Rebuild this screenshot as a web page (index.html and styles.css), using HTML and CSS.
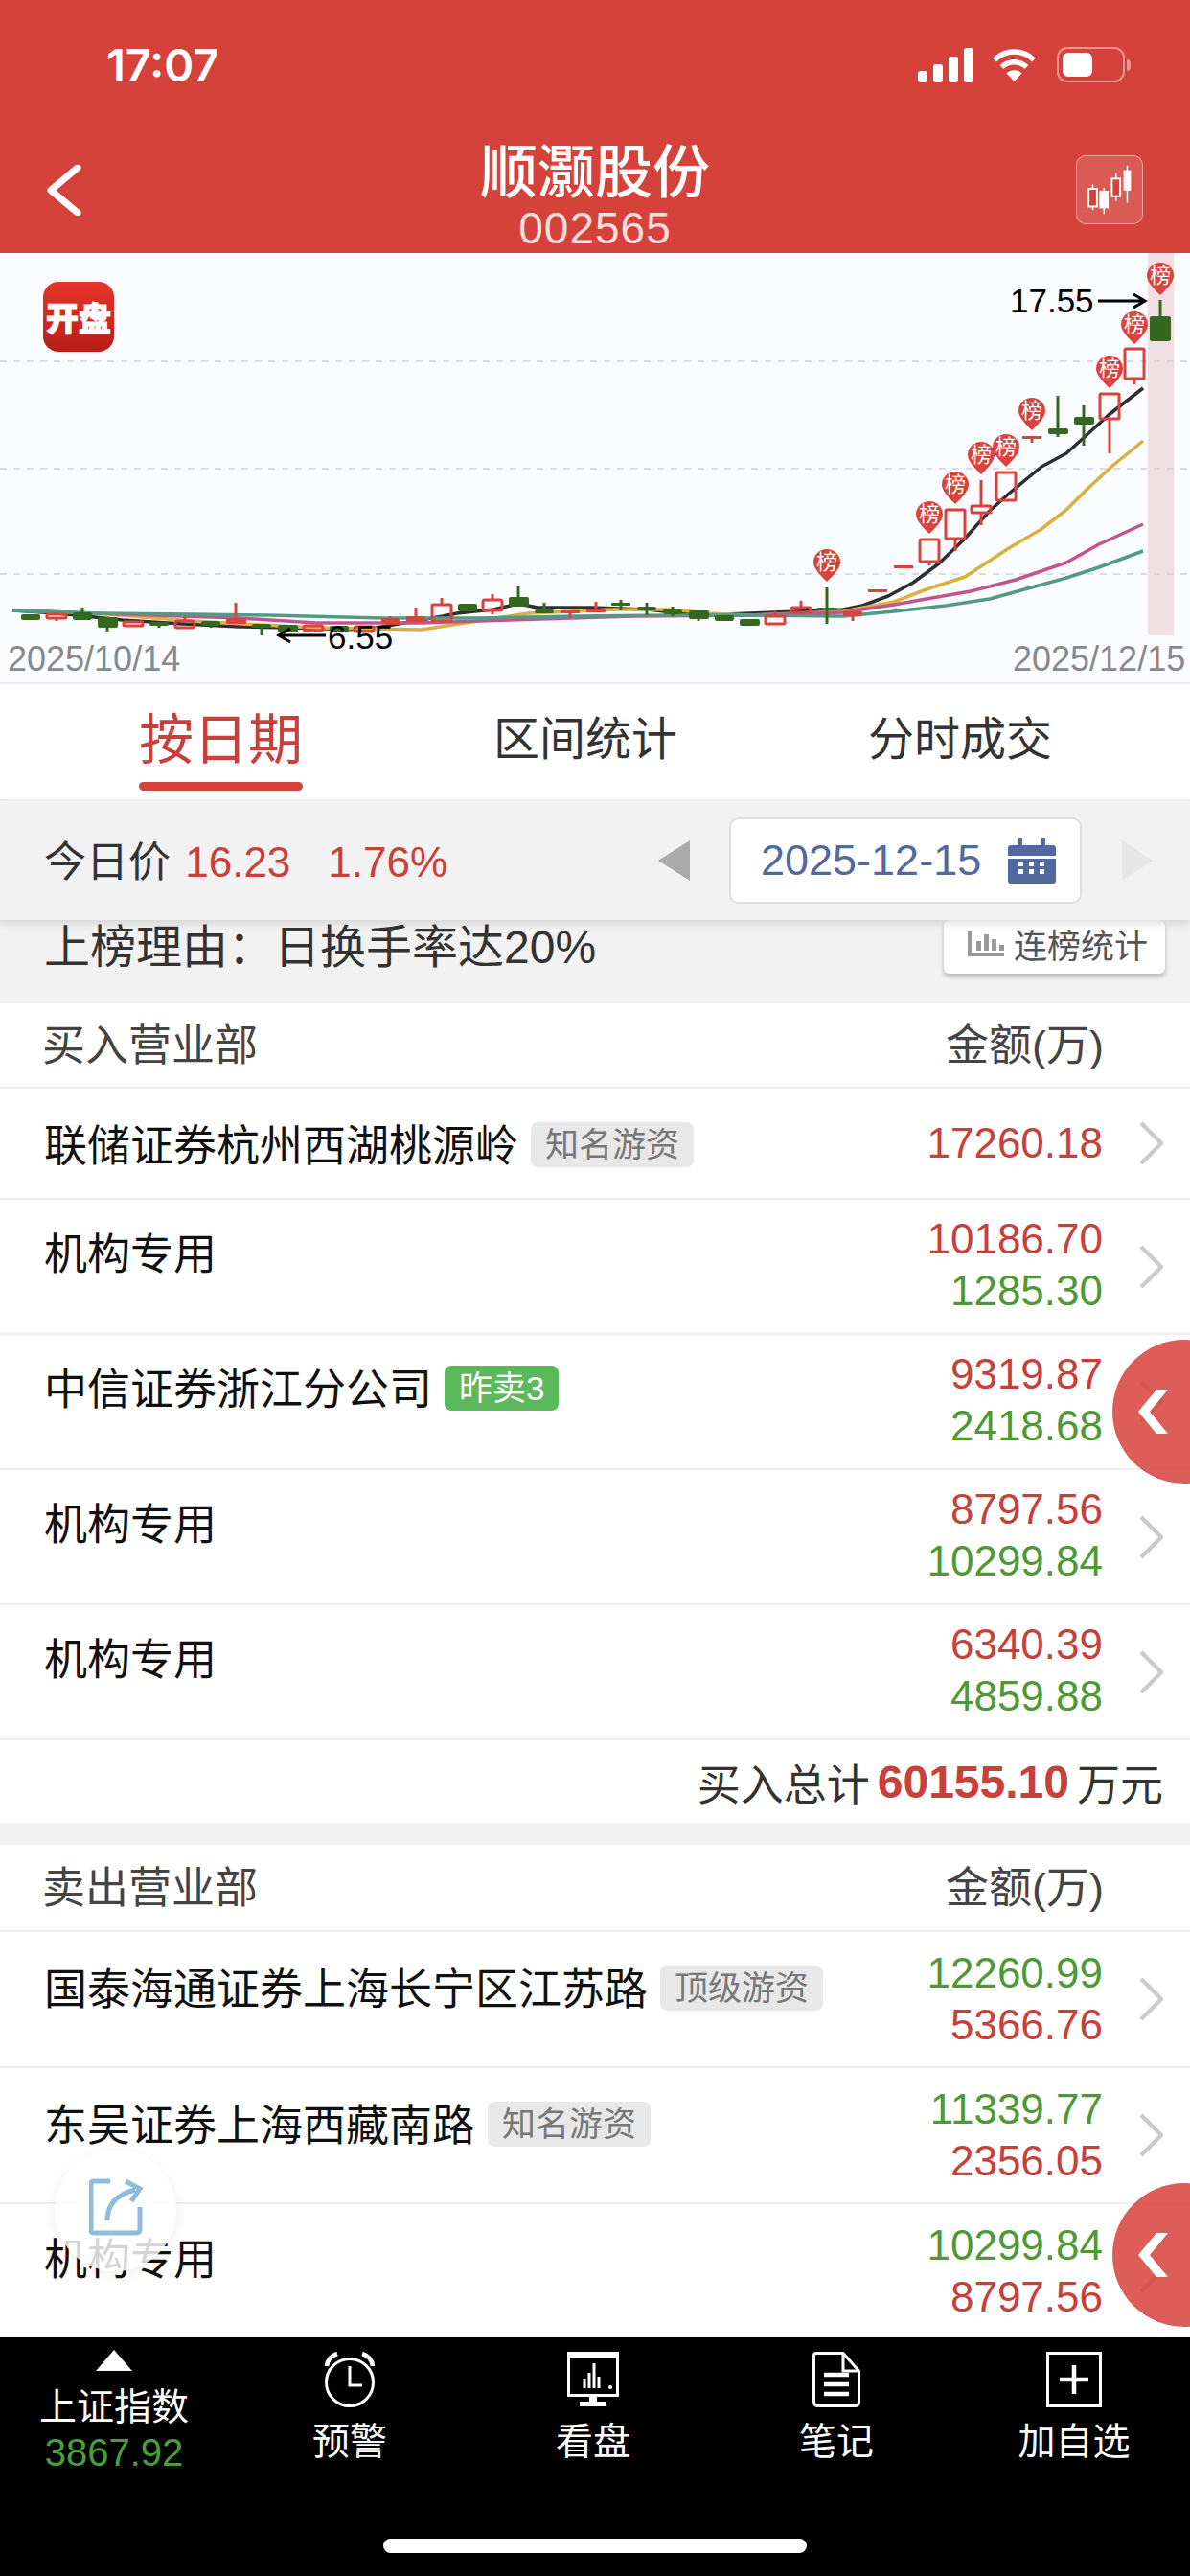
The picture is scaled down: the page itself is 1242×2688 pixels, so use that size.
FILE: index.html
```html
<!DOCTYPE html>
<html lang="zh-CN">
<head>
  <meta charset="UTF-8">
  <meta name="viewport" content="width=device-width, initial-scale=1.0">
  <title>顺灏股份</title>
  <link rel="stylesheet" href="styles.css">
</head>
<body>
  <div class="page">
    <header class="header">
      <div class="status">
        <span class="clock">17:07</span>
        <div class="status-icons">
          <div class="signal"><i></i><i></i><i></i><i></i></div>
          <svg class="wifi" viewBox="0 0 47 35">
            <path class="arc" d="M3 12.5A29 29 0 0 1 44 12.5"/>
            <path class="arc" d="M10.5 20A18.500 18.500 0 0 1 36.500 20"/>
            <path d="M23.500 35L15.500 26.500A11.500 11.500 0 0 1 31.500 26.500Z"/>
          </svg>
          <div class="battery"><b></b></div>
          <span class="battery-tip"></span>
        </div>
      </div>
      <div class="nav">
        <svg class="back" viewBox="0 0 37 53"><path d="M33 3L5 26.500L33 50"/></svg>
        <div class="nav-title">
          <h1>顺灏股份</h1>
          <p>002565</p>
        </div>
        <div class="kline-btn">
          <svg viewBox="0 0 70 72">
            <path class="w" d="M17 30V58M29 34V62M42 18V48M54 10V50"/>
            <rect class="o" x="12.500" y="35" width="9" height="19"/>
            <rect class="f" x="24" y="37" width="10" height="19"/>
            <rect class="o" x="37.500" y="24" width="9" height="19"/>
            <rect class="f" x="50" y="15" width="8" height="22"/>
          </svg>
        </div>
      </div>
    </header>

    <section class="chart">
      <svg class="kline" viewBox="0 264 1242 448">
        <rect class="today" x="1198" y="264" width="27" height="399"/>
        <path class="grid" d="M0 377H1242M0 489H1242M0 599H1242"/>

        <!-- moving averages, under the candles -->
        <polyline class="ma ma5" points="13,637 60,640 128,647 190,651 250,654 300,655 381,657 462,643 477,640 515,636 541,630 561,634 617,634 676,636 729,642 783,640 880,636 900,632 927,622 953,608 980,588 1007,562 1033,533 1053,515 1087,487 1113,473 1133,455 1157,433 1193,405"/>
        <polyline class="ma ma10" points="13,637 100,640 200,648 330,655 440,657 551,640 638,636 700,636 740,640 783,642 880,638 933,628 967,615 1007,602 1053,572 1087,552 1113,532 1133,512 1160,487 1193,460"/>
        <polyline class="ma ma20" points="13,637 100,640 250,645 330,650 440,650 500,648 660,643 783,642 880,639 933,631 967,625 1013,617 1060,605 1113,587 1147,568 1193,547"/>
        <polyline class="ma ma30" points="13,637 100,640 200,641 280,642 400,645 500,645 600,643 700,642 783,642 880,643 933,638 987,632 1033,625 1113,603 1147,592 1193,575"/>

        <!-- falling days -->
        <path class="wick down" d="M86 634V647M112 655V659M166 653V655M220 653V655M273 651V663M541 612V623M568 629V636M648 626V637M675 629V642M702 633V643M729 646V648M863 613V651M1104 413V456M1131 423V465M1211 313V330"/>
        <g class="down">
          <rect x="22" y="641" width="20" height="6" rx="2"/>
          <rect x="76" y="639" width="20" height="8" rx="2"/>
          <rect x="102" y="644" width="21" height="11" rx="2"/>
          <rect x="156" y="649" width="20" height="4" rx="2"/>
          <rect x="210" y="648" width="20" height="5" rx="2"/>
          <rect x="263" y="651" width="20" height="4" rx="2"/>
          <rect x="290" y="652" width="21" height="8" rx="2"/>
          <rect x="344" y="653" width="20" height="6" rx="2"/>
          <rect x="478" y="630" width="20" height="8" rx="2"/>
          <rect x="531" y="623" width="21" height="10" rx="2"/>
          <rect x="558" y="636" width="20" height="4" rx="2"/>
          <rect x="638" y="629" width="20" height="3" rx="1"/>
          <rect x="665" y="633" width="20" height="4" rx="2"/>
          <rect x="692" y="636" width="20" height="5" rx="2"/>
          <rect x="719" y="637" width="21" height="9" rx="2"/>
          <rect x="746" y="642" width="20" height="6" rx="2"/>
          <rect x="772" y="646" width="21" height="7" rx="2"/>
          <rect x="853" y="634" width="20" height="3" rx="1"/>
          <rect x="1094" y="447" width="21" height="6" rx="2"/>
          <rect x="1121" y="435" width="21" height="8" rx="2"/>
          <rect x="1200" y="330" width="22" height="26" rx="2"/>
        </g>

        <!-- rising days -->
        <path class="wick up" d="M59 645V648M193 643V648M246 629V645M434 634V643M407 643V648M461 624V631M514 620V626M514 637V641M595 640V645M622 628V635M809 638V643M836 627V634M890 643V648M970 586V590M997 562V575M1024 501V528M1024 535V548M1077 456V462M1158 437V473M1184 395V401M327 658V660"/>
        <g class="up">
          <rect x="49" y="641" width="20" height="4" rx="1"/>
          <rect x="129" y="649" width="20" height="4" rx="1"/>
          <rect x="183" y="648" width="20" height="7" rx="2"/>
          <rect x="317" y="653" width="20" height="5" rx="2"/>
          <rect x="370" y="654" width="20" height="5" rx="2"/>
          <rect x="451" y="631" width="20" height="17" rx="1"/>
          <rect x="504" y="626" width="20" height="11" rx="2"/>
          <rect x="799" y="643" width="20" height="8" rx="1"/>
          <rect x="826" y="634" width="20" height="5" rx="1"/>
          <rect x="960" y="563" width="20" height="23" rx="1"/>
          <rect x="987" y="532" width="20" height="30" rx="1"/>
          <rect x="1014" y="528" width="20" height="7" rx="1"/>
          <rect x="1040" y="493" width="20" height="29" rx="1"/>
          <rect x="1148" y="411" width="20" height="26" rx="1"/>
          <rect x="1174" y="364" width="20" height="31" rx="1"/>
        </g>
        <g class="up-solid">
          <rect x="398" y="645" width="20" height="6" rx="1"/>
          <rect x="236" y="645" width="21" height="6" rx="1"/>
          <rect x="424" y="643" width="20" height="6" rx="1"/>
          <rect x="585" y="637" width="20" height="3" rx="1"/>
          <rect x="612" y="635" width="20" height="4" rx="1"/>
          <rect x="880" y="638" width="20" height="5" rx="1"/>
          <rect x="906" y="615" width="20" height="3"/>
          <rect x="933" y="590" width="20" height="3"/>
          <rect x="1067" y="455" width="20" height="3"/>
        </g>

        <!-- dragon list markers -->
        <g class="pin" transform="translate(863 587)"><path d="M-14 0A14 14 0 1 1 14 0Q14 7 0 20Q-14 7-14 0Z"/><text y="7">榜</text></g>
        <g class="pin" transform="translate(970 537)"><path d="M-14 0A14 14 0 1 1 14 0Q14 7 0 20Q-14 7-14 0Z"/><text y="7">榜</text></g>
        <g class="pin" transform="translate(997 506)"><path d="M-14 0A14 14 0 1 1 14 0Q14 7 0 20Q-14 7-14 0Z"/><text y="7">榜</text></g>
        <g class="pin" transform="translate(1024 475)"><path d="M-14 0A14 14 0 1 1 14 0Q14 7 0 20Q-14 7-14 0Z"/><text y="7">榜</text></g>
        <g class="pin" transform="translate(1050 467)"><path d="M-14 0A14 14 0 1 1 14 0Q14 7 0 20Q-14 7-14 0Z"/><text y="7">榜</text></g>
        <g class="pin" transform="translate(1077 429)"><path d="M-14 0A14 14 0 1 1 14 0Q14 7 0 20Q-14 7-14 0Z"/><text y="7">榜</text></g>
        <g class="pin" transform="translate(1158 385)"><path d="M-14 0A14 14 0 1 1 14 0Q14 7 0 20Q-14 7-14 0Z"/><text y="7">榜</text></g>
        <g class="pin" transform="translate(1184 339)"><path d="M-14 0A14 14 0 1 1 14 0Q14 7 0 20Q-14 7-14 0Z"/><text y="7">榜</text></g>
        <g class="pin" transform="translate(1211 288)"><path d="M-14 0A14 14 0 1 1 14 0Q14 7 0 20Q-14 7-14 0Z"/><text y="7">榜</text></g>

        <!-- high and low labels -->
        <text class="extreme" x="1054" y="326">17.55</text>
        <path class="arrow" d="M1146 314H1194M1183 307L1195 314L1183 321"/>
        <text class="extreme" x="342" y="677">6.55</text>
        <path class="arrow" d="M340 663H292M303 656L291 663L303 670"/>

        <text class="date" x="8" y="700">2025/10/14</text>
        <text class="date" x="1057" y="700">2025/12/15</text>
      </svg>
      <div class="open-logo">开盘</div>
    </section>

    <nav class="tabs">
      <div class="tab active">按日期</div>
      <div class="tab">区间统计</div>
      <div class="tab">分时成交</div>
    </nav>

    <div class="toolbar">
      <div class="today-price">今日价 <span class="num">16.23</span><span class="num pct">1.76%</span></div>
      <div class="date-picker">
        <span class="tri tri-prev"></span>
        <div class="date-box">
          <span>2025-12-15</span>
          <svg class="calendar" viewBox="0 0 50 48">
            <path d="M3 8H47Q50 8 50 11V45Q50 48 47 48H3Q0 48 0 45V11Q0 8 3 8Z"/>
            <rect x="0" y="19" width="50" height="3" fill="#fff"/>
            <path class="ring" d="M13 0V12M37 0V12"/>
            <g fill="#fff">
              <rect x="11" y="25" width="5" height="5"/><rect x="22" y="25" width="5" height="5"/><rect x="33" y="25" width="5" height="5"/>
              <rect x="11" y="33" width="5" height="5"/><rect x="22" y="33" width="5" height="5"/><rect x="33" y="33" width="5" height="5"/>
            </g>
          </svg>
        </div>
        <span class="tri tri-next"></span>
      </div>
    </div>

    <main class="list">
      <div class="reason">
        <span>上榜理由：日换手率达20%</span>
        <button class="streak-btn">
          <svg viewBox="0 0 38 26"><path d="M0 0H4V22H38V26H0ZM9 10H14V20H9ZM17 3H22V20H17ZM25 8H30V20H25ZM33 14H38V20H33Z"/></svg>
          连榜统计
        </button>
      </div>

      <div class="list-head"><span>买入营业部</span><span class="amount-title">金额(万)</span></div>
      <div class="row row-single">
        <div class="name">联储证券杭州西湖桃源岭<span class="tag">知名游资</span></div>
        <div class="values"><div class="red">17260.18</div></div>
        <svg class="chev" viewBox="0 0 25 46"><path d="M2 2L23 23L2 44"/></svg>
      </div>
      <div class="row">
        <div class="name">机构专用</div>
        <div class="values"><div class="red">10186.70</div><div class="green">1285.30</div></div>
        <svg class="chev" viewBox="0 0 25 46"><path d="M2 2L23 23L2 44"/></svg>
      </div>
      <div class="row">
        <div class="name">中信证券浙江分公司<span class="tag tag-green">昨卖3</span></div>
        <div class="values"><div class="red">9319.87</div><div class="green">2418.68</div></div>
        <svg class="chev" viewBox="0 0 25 46"><path d="M2 2L23 23L2 44"/></svg>
      </div>
      <div class="row">
        <div class="name">机构专用</div>
        <div class="values"><div class="red">8797.56</div><div class="green">10299.84</div></div>
        <svg class="chev" viewBox="0 0 25 46"><path d="M2 2L23 23L2 44"/></svg>
      </div>
      <div class="row">
        <div class="name">机构专用</div>
        <div class="values"><div class="red">6340.39</div><div class="green">4859.88</div></div>
        <svg class="chev" viewBox="0 0 25 46"><path d="M2 2L23 23L2 44"/></svg>
      </div>
      <div class="total">买入总计<b>60155.10</b>万元</div>

      <div class="list-head list-head-sell"><span>卖出营业部</span><span class="amount-title">金额(万)</span></div>
      <div class="row row-sell">
        <div class="name">国泰海通证券上海长宁区江苏路<span class="tag">顶级游资</span></div>
        <div class="values"><div class="green">12260.99</div><div class="red">5366.76</div></div>
        <svg class="chev" viewBox="0 0 25 46"><path d="M2 2L23 23L2 44"/></svg>
      </div>
      <div class="row row-sell">
        <div class="name">东吴证券上海西藏南路<span class="tag">知名游资</span></div>
        <div class="values"><div class="green">11339.77</div><div class="red">2356.05</div></div>
        <svg class="chev" viewBox="0 0 25 46"><path d="M2 2L23 23L2 44"/></svg>
      </div>
      <div class="row row-sell">
        <div class="name">机构专用</div>
        <div class="values"><div class="green">10299.84</div><div class="red">8797.56</div></div>
        <svg class="chev" viewBox="0 0 25 46"><path d="M2 2L23 23L2 44"/></svg>
      </div>
    </main>

    <footer class="tabbar">
      <div class="bar-item bar-index">
        <span class="index-up"></span>
        <span class="index-name">上证指数</span>
        <span class="index-value">3867.92</span>
      </div>
      <div class="bar-item">
        <svg class="bar-icon" viewBox="0 0 54 58">
          <circle cx="27" cy="32" r="24.500"/>
          <path d="M27 15V35H40"/>
          <path class="bold" d="M3 15Q4 5 14 2M51 15Q50 5 40 2"/>
        </svg>
        <span>预警</span>
      </div>
      <div class="bar-item">
        <svg class="bar-icon" viewBox="0 0 54 58">
          <rect x="1.500" y="1.500" width="51" height="44"/>
          <path class="fill" d="M0 0H54V6H0ZM23 46H31V52H41V57H13V52H23Z"/>
          <path d="M18 38V28M23 38V22M28 38V12M33 38V26"/>
          <circle class="fill" cx="45" cy="37" r="2"/>
        </svg>
        <span>看盘</span>
      </div>
      <div class="bar-item">
        <svg class="bar-icon" viewBox="0 0 50 58">
          <path d="M4 1.500H32L48.500 20V52Q48.500 56.500 44 56.500H6Q1.500 56.500 1.500 52V4Q1.500 1.500 4 1.500Z"/>
          <path d="M32 1.500V20H48.500"/>
          <path class="bold" d="M12 24H38M12 34H38M12 44H38"/>
        </svg>
        <span>笔记</span>
      </div>
      <div class="bar-item">
        <svg class="bar-icon" viewBox="0 0 58 58">
          <rect x="1.500" y="1.500" width="55" height="55"/>
          <path class="bold" d="M29 14V44M14 29H44"/>
        </svg>
        <span>加自选</span>
      </div>
      <div class="home-line"></div>
    </footer>

    <div class="side-btn side-btn-top"><svg viewBox="0 0 31 46"><path d="M19 0H31L12 23L31 46H19L0 23Z"/></svg></div>
    <div class="side-btn side-btn-bottom"><svg viewBox="0 0 31 46"><path d="M19 0H31L12 23L31 46H19L0 23Z"/></svg></div>

    <div class="share">
      <svg viewBox="0 0 58 60">
        <path class="share-box" d="M22 3H5Q2 3 2 6V54Q2 57 5 57H49Q53 57 53 53V30"/>
        <path class="share-arrow" d="M19 44Q19 19 48 12M38 3L53 11L44 24"/>
      </svg>
    </div>
  </div>
</body>
</html>
```

FILE: styles.css
```css
* {
  box-sizing: border-box;
}
html, body {
  margin: 0;
  padding: 0;
}
body {
  font-family: "Liberation Sans", "Noto Sans CJK SC", sans-serif;
  color: #222;
  background: #fff;
}
.page {
  position: relative;
  width: 1242px;
  height: 2688px;
  display: flex;
  flex-direction: column;
  overflow: hidden;
}

/* red header */
.header {
  flex: 0 0 264px;
  background: #d5423b;
  color: #fff;
}
.status {
  height: 140px;
  padding: 42px 62px 0 111px;
  display: flex;
  justify-content: space-between;
  align-items: flex-start;
}
.clock {
  font-family: Inter, "Liberation Sans", sans-serif;
  font-size: 47px;
  font-weight: 600;
  line-height: 52px;
}
.status-icons {
  display: flex;
  align-items: center;
  margin-top: 7px;
}
.signal {
  display: flex;
  align-items: flex-end;
  gap: 6px;
  height: 36px;
}
.signal i {
  width: 10px;
  background: #fff;
  border-radius: 3px;
}
.signal i:nth-child(1) { height: 12px; }
.signal i:nth-child(2) { height: 19px; }
.signal i:nth-child(3) { height: 27px; }
.signal i:nth-child(4) { height: 36px; }
.wifi {
  width: 47px;
  height: 35px;
  margin-left: 19px;
  fill: #fff;
}
.wifi .arc {
  fill: none;
  stroke: #fff;
  stroke-width: 5.500;
}
.battery {
  width: 71px;
  height: 37px;
  margin-left: 21px;
  padding: 4px;
  border: 2px solid rgba(255, 255, 255, 0.45);
  border-radius: 11px;
}
.battery b {
  display: block;
  width: 31px;
  height: 25px;
  background: #fff;
  border-radius: 6px;
}
.battery-tip {
  width: 4px;
  height: 12px;
  margin-left: 2px;
  background: rgba(255, 255, 255, 0.45);
  border-radius: 0 4px 4px 0;
}
.nav {
  height: 124px;
  position: relative;
  display: flex;
  justify-content: center;
}
.back {
  position: absolute;
  left: 48px;
  top: 32px;
  width: 37px;
  height: 53px;
  fill: none;
  stroke: #fff;
  stroke-width: 7;
  stroke-linecap: round;
  stroke-linejoin: round;
}
.nav-title {
  padding-top: 3px;
  text-align: center;
}
.nav-title h1 {
  margin: 0;
  font-size: 60px;
  font-weight: 500;
  line-height: 76px;
}
.nav-title p {
  margin: -5px 0 0;
  font-size: 46px;
  line-height: 48px;
  letter-spacing: 1px;
  color: #f7dedc;
}
.kline-btn {
  position: absolute;
  left: 1123px;
  top: 22px;
  width: 70px;
  height: 72px;
  background: rgba(255, 255, 255, 0.13);
  border: 1px solid rgba(255, 255, 255, 0.45);
  border-radius: 10px;
}
.kline-btn svg {
  display: block;
  width: 68px;
  height: 70px;
}
.kline-btn .w {
  stroke: #fff;
  stroke-width: 1.500;
}
.kline-btn .o {
  fill: #d5423b;
  stroke: #fff;
  stroke-width: 2;
}
.kline-btn .f {
  fill: #fff;
}

/* candlestick chart */
.chart {
  position: relative;
  flex: 0 0 448px;
  background: #fbfcff;
  border-bottom: 2px solid #e9e9ec;
}
.kline {
  display: block;
  width: 1242px;
  height: 448px;
}
.today {
  fill: #f2dfe3;
}
.grid {
  fill: none;
  stroke: #cfcfd2;
  stroke-width: 1.500;
  stroke-dasharray: 7 7;
}
.ma {
  fill: none;
  stroke-width: 3.500;
  stroke-linejoin: round;
}
.ma5 { stroke: #2f2f2f; }
.ma10 { stroke: #d9b13c; }
.ma20 { stroke: #c2558e; }
.ma30 { stroke: #4f9c86; }
.wick {
  fill: none;
  stroke-width: 3;
}
.wick.down { stroke: #35681f; }
.wick.up { stroke: #d9433c; }
.down rect {
  fill: #35681f;
}
.up rect {
  fill: none;
  stroke: #d9433c;
  stroke-width: 3;
}
.up-solid rect {
  fill: #d9433c;
}
.pin path {
  fill: #d9433c;
}
.pin text {
  fill: #fff;
  font-size: 22px;
  text-anchor: middle;
}
.extreme {
  font-size: 35px;
  fill: #000;
}
.arrow {
  fill: none;
  stroke: #000;
  stroke-width: 3;
}
.date {
  font-size: 36px;
  fill: #88898c;
}
.open-logo {
  position: absolute;
  left: 45px;
  top: 30px;
  width: 74px;
  height: 73px;
  display: flex;
  align-items: center;
  justify-content: center;
  background: linear-gradient(#e8352a, #b71f18);
  border-radius: 16px;
  color: #fff;
  font-size: 34px;
  font-weight: 900;
  white-space: nowrap;
  -webkit-text-stroke: 1px #fff;
}

/* tabs */
.tabs {
  flex: 0 0 120px;
  display: flex;
  gap: 199px;
  padding-left: 145px;
}
.tab {
  height: 120px;
  font-size: 48px;
  line-height: 116px;
  color: #333;
}
.tab.active {
  position: relative;
  width: 171px;
  font-size: 57px;
  text-align: center;
  color: #c9403a;
}
.tab.active::after {
  content: "";
  position: absolute;
  left: 0;
  right: 0;
  bottom: 9px;
  height: 9px;
  background: #d5423b;
  border-radius: 5px;
}

/* today's price and date picker */
.toolbar {
  position: relative;
  z-index: 2;
  flex: 0 0 126px;
  display: flex;
  justify-content: space-between;
  align-items: center;
  padding: 0 39px 0 46px;
  background: #f2f2f2;
  border-top: 2px solid #ebebeb;
  box-shadow: 0 4px 8px rgba(0, 0, 0, 0.12);
}
.today-price {
  margin-top: -4px;
  font-size: 44px;
  color: #333;
}
.num {
  margin-left: 3px;
  color: #c9403a;
}
.pct {
  margin-left: 39px;
}
.date-picker {
  display: flex;
  align-items: center;
}
.tri {
  width: 0;
  height: 0;
  border-top: 21px solid transparent;
  border-bottom: 21px solid transparent;
}
.tri-prev {
  border-right: 33px solid #aaa;
}
.tri-next {
  border-left: 32px solid #e6e6e6;
}
.date-box {
  width: 368px;
  height: 90px;
  margin: 0 42px 0 41px;
  padding: 0 25px 0 31px;
  display: flex;
  justify-content: space-between;
  align-items: center;
  background: #fff;
  border: 2px solid #dedede;
  border-radius: 10px;
  font-size: 45px;
  color: #54699b;
}
.calendar {
  width: 50px;
  height: 48px;
  fill: #5269a0;
}
.calendar .ring {
  fill: none;
  stroke: #5269a0;
  stroke-width: 4;
}

/* list of trading desks */
.list {
  flex: 1;
  min-height: 0;
  overflow: hidden;
}
.reason {
  height: 87px;
  padding: 0 26px 0 46px;
  display: flex;
  justify-content: space-between;
  align-items: flex-start;
  background: #f2f2f2;
  font-size: 48px;
  line-height: 58px;
  color: #333;
}
.streak-btn {
  width: 231px;
  height: 56px;
  padding: 0 0 7px 25px;
  display: flex;
  align-items: center;
  gap: 10px;
  background: #fff;
  border: 0;
  border-radius: 6px;
  box-shadow: 0 3px 5px rgba(0, 0, 0, 0.25);
  font-family: inherit;
  font-size: 35px;
  color: #555;
}
.streak-btn svg {
  width: 38px;
  height: 26px;
  fill: #999;
}
.list-head {
  height: 89px;
  padding: 0 90px 7px 44px;
  display: flex;
  justify-content: space-between;
  align-items: center;
  border-bottom: 2px solid #eee;
  font-size: 45px;
  color: #444;
}
.row {
  height: 141px;
  padding-left: 46px;
  padding-right: 28px;
  display: flex;
  align-items: center;
  border-bottom: 2px solid #eee;
}
.row-single {
  height: 116px;
}
.row-sell {
  height: 142px;
}
.name {
  flex: 1;
  align-self: flex-start;
  height: 106px;
  display: flex;
  align-items: center;
  font-size: 45px;
  color: #111;
  white-space: nowrap;
}
.row-single .name,
.row-sell .name {
  height: 112px;
}
.row-sell:last-child .name {
  height: 108px;
}
.tag {
  height: 47px;
  margin: 4px 0 0 13px;
  padding: 0 15px;
  background: #e8e8e8;
  border-radius: 7px;
  font-size: 35px;
  line-height: 47px;
  color: #777;
}
.tag-green {
  background: #5cb85c;
  color: #fff;
}
.values {
  margin-top: -3px;
  font-size: 44px;
  line-height: 54px;
  text-align: right;
}
.row-single .values,
.row-sell .values {
  margin-top: 0;
}
.red { color: #c9403a; }
.green { color: #4d9a35; }
.chev {
  width: 25px;
  height: 46px;
  margin-left: 38px;
  fill: none;
  stroke: #ccc;
  stroke-width: 4.500;
}
.total {
  height: 86px;
  padding-right: 28px;
  display: flex;
  justify-content: flex-end;
  align-items: center;
  font-size: 45px;
  color: #333;
}
.total b {
  margin: 0 8px;
  font-size: 48px;
  color: #c9403a;
}
.list-head-sell {
  height: 114px;
  padding-top: 23px;
  background: linear-gradient(#f2f2f2 23px, #fff 23px);
}

/* bottom bar */
.tabbar {
  position: relative;
  flex: 0 0 249px;
  display: grid;
  grid-template-columns: 238px 254px 254px 254px 242px;
  align-items: start;
  background: #000;
  color: #fff;
}
.bar-item {
  display: flex;
  flex-direction: column;
  align-items: center;
  padding-top: 15px;
  font-size: 39px;
  line-height: 44px;
}
.bar-item span {
  display: block;
}
.bar-icon {
  height: 58px;
  margin-bottom: 14px;
  fill: none;
  stroke: #fff;
  stroke-width: 3;
}
.bar-icon .fill {
  fill: #fff;
  stroke: none;
}
.bar-icon .bold {
  stroke-width: 4.500;
}
.bar-index {
  padding-top: 13px;
}
.index-up {
  width: 0;
  height: 0;
  margin-bottom: 16px;
  border-left: 19px solid transparent;
  border-right: 19px solid transparent;
  border-bottom: 22px solid #fff;
}
.index-value {
  font-size: 40px;
  line-height: 50px;
  color: #4a9e3a;
}
.home-line {
  position: absolute;
  left: 400px;
  top: 210px;
  width: 442px;
  height: 15px;
  background: #fff;
  border-radius: 8px;
}

/* floating buttons */
.side-btn {
  position: absolute;
  left: 1161px;
  width: 150px;
  height: 150px;
  padding: 52px 0 0 27px;
  background: rgba(214, 62, 56, 0.84);
  border-radius: 50%;
}
.side-btn svg {
  display: block;
  width: 31px;
  height: 46px;
  fill: #fff;
}
.side-btn-top {
  top: 1398px;
}
.side-btn-bottom {
  top: 2278px;
}
.share {
  position: absolute;
  left: 57px;
  top: 2243px;
  width: 127px;
  height: 127px;
  padding: 30px 0 0 36px;
  background: rgba(255, 255, 255, 0.82);
  border-radius: 50%;
  box-shadow: 0 4px 14px rgba(0, 0, 0, 0.07);
}
.share svg {
  display: block;
  width: 58px;
  height: 60px;
  fill: none;
  stroke: #8fbcdb;
  stroke-width: 5;
}
```
